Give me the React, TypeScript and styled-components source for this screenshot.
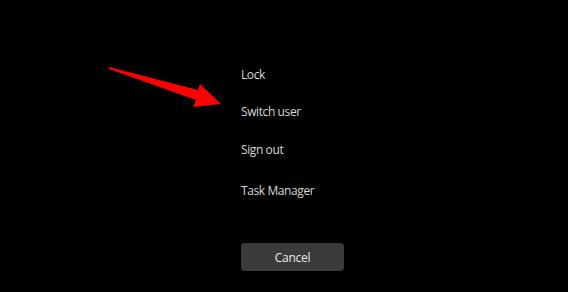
import React from "react";
import styled, { createGlobalStyle } from "styled-components";

const GlobalStyle = createGlobalStyle`
  html, body {
    margin: 0;
    padding: 0;
    background: #000000;
  }
`;

const Screen = styled.div`
  position: relative;
  width: 568px;
  height: 292px;
  background: #000000;
  overflow: hidden;
  font-family: "Open Sans", "Noto Sans", sans-serif;
`;

const Menu = styled.div`
  display: flex;
  flex-direction: column;
  align-items: flex-start;
  padding: 66px 0 0 241px;
`;

const Item = styled.div<{ $gap: number }>`
  margin-top: ${(p) => p.$gap}px;
  height: 17px;
  line-height: 17px;
  font-size: 12px;
  letter-spacing: -0.4px;
  color: #d8d8d8;
  cursor: default;
`;

const CancelButton = styled.button`
  margin-top: 44px;
  width: 103px;
  height: 28px;
  border: none;
  border-radius: 4px;
  background: #3a3a3a;
  color: #e8e8e8;
  font-family: inherit;
  font-size: 12px;
  letter-spacing: -0.3px;
  padding: 0;
`;

const Arrow = styled.svg`
  position: absolute;
  left: 0;
  top: 0;
  pointer-events: none;
`;

const items = [
  { label: "Lock", gap: 0 },
  { label: "Switch user", gap: 20 },
  { label: "Sign out", gap: 21 },
  { label: "Task Manager", gap: 24 },
];

const App: React.FC = () => {
  return (
    <>
      <GlobalStyle />
      <Screen>
        <Menu>
          {items.map((it) => (
            <Item key={it.label} $gap={it.gap}>
              {it.label}
            </Item>
          ))}
          <CancelButton>Cancel</CancelButton>
        </Menu>
        <Arrow width="568" height="292" viewBox="0 0 568 292">
          <polygon
            points="109,67 198,90 200,84 221,104 193,107 196,100 109,69"
            fill="#ff0000"
          />
        </Arrow>
      </Screen>
    </>
  );
};

export default App;
